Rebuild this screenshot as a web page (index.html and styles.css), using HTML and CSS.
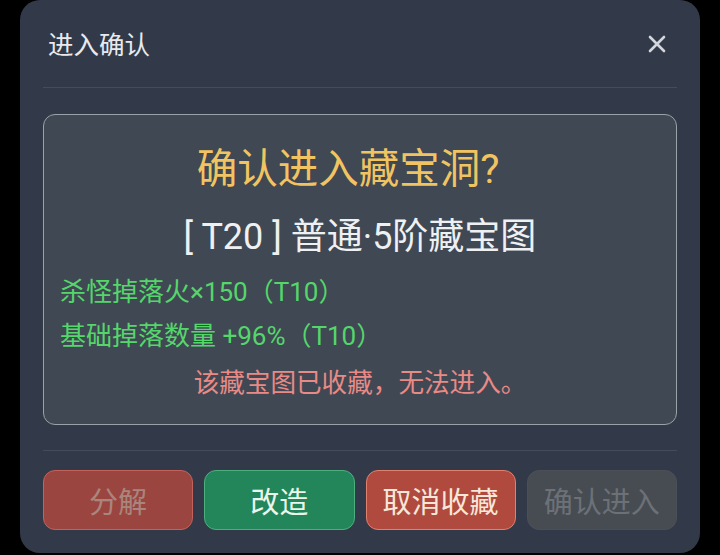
FILE: index.html
```html
<!DOCTYPE html>
<html lang="zh">
<head>
<meta charset="utf-8">
<link rel="stylesheet" href="styles.css">
</head>
<body>
<div class="dialog">
  <div class="header">
    <div class="title">进入确认</div>
    <svg class="close" width="20" height="20" viewBox="0 0 20 20"><path d="M3 3 L17 17 M17 3 L3 17" stroke="#d3d6db" stroke-width="2.6" stroke-linecap="round"/></svg>
  </div>
  <div class="box">
    <div class="q">确认进入藏宝洞?</div>
    <div class="name">[ T20 ] 普通·5阶藏宝图</div>
    <div class="attr">杀怪掉落火×150（T10）</div>
    <div class="attr">基础掉落数量 +96%（T10）</div>
    <div class="warn">该藏宝图已收藏，无法进入。</div>
  </div>
  <div class="footer">
    <div class="btn b-split">分解</div>
    <div class="btn b-mod">改造</div>
    <div class="btn b-unfav">取消收藏</div>
    <div class="btn b-enter">确认进入</div>
  </div>
</div>
</body>
</html>
```
FILE: styles.css
```css
html, body { margin: 0; padding: 0; background: #000; }
body {
  width: 720px; height: 555px; overflow: hidden;
  font-family: Roboto, "Noto Sans CJK SC", sans-serif;
}
.dialog {
  margin-left: 20px;
  width: 680px; height: 553px;
  box-sizing: border-box;
  background: #323a4a;
  border-radius: 20px;
  padding: 0 23px;
  display: flex; flex-direction: column;
}
.header {
  height: 88px;
  border-bottom: 1px solid #434c5c;
  display: flex; align-items: center; justify-content: space-between;
  box-sizing: border-box;
  padding: 0 0 0 5px;
}
.title { color: #e8eaee; font-size: 25.5px; line-height: 36px; margin-top: 2px; }
.close { margin-right: 10px; margin-top: 0; }
.box {
  margin-top: 26px;
  height: 311px; box-sizing: border-box;
  background: #3f4853;
  border: 1.5px solid #9aa1a8;
  border-radius: 12px;
  padding: 31px 16px 0 16px;
  display: flex; flex-direction: column;
}
.q { color: #f2c461; font-size: 40.5px; line-height: 46px; text-align: center; padding-right: 24px; }
.name { color: #eef0f2; font-size: 36px; line-height: 46px; text-align: center; margin-top: 22px; }
.attr { color: #55d66b; font-size: 26px; line-height: 44px; }
.name + .attr { margin-top: 10px; }
.warn { color: #e98a86; font-size: 25.6px; line-height: 44px; text-align: center; margin-top: 3px; }
.footer {
  margin-top: 25px;
  border-top: 1px solid #434c5c;
  padding-top: 19px;
  display: flex; gap: 11px;
}
.btn {
  flex: 1; height: 60px; box-sizing: border-box;
  border-radius: 12px;
  display: flex; align-items: center; justify-content: center;
  font-size: 29px;
  border: 1.5px solid transparent;
}
.b-split { background: #9b4540; border-color: #c2625b; color: #a9857e; }
.b-mod { background: #22865a; border-color: #4fae7e; color: #eaf5ee; }
.b-unfav { background: #b04a3e; border-color: #e0806f; color: #f7e7d9; }
.b-enter { background: #474c52; border-color: #4b5056; color: #6c7177; }
```
